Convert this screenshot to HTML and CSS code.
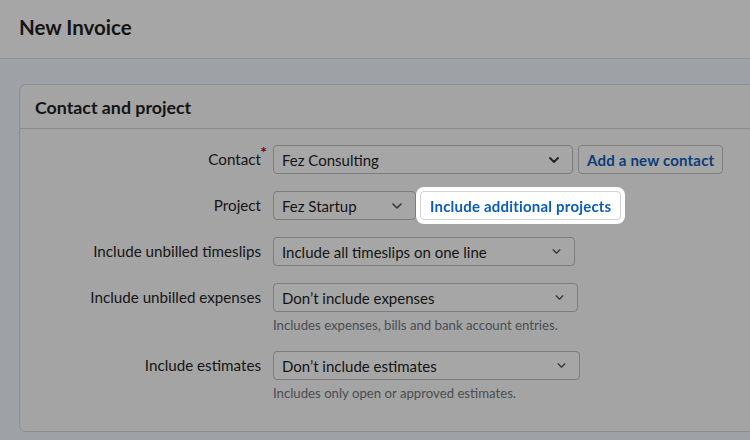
FILE: index.html
```html
<!DOCTYPE html>
<html lang="en">
<head>
<meta charset="utf-8">
<title>New Invoice</title>
<link rel="stylesheet" href="styles.css">
</head>
<body>
<header class="page-header">
  <h1 class="page-title">New Invoice</h1>
</header>
<main class="page-main">
  <section class="card">
    <div class="card-header">
      <h2 class="card-title">Contact and project</h2>
    </div>
    <div class="card-body">
      <div class="form-row">
        <label class="form-label">Contact<span class="required">*</span></label>
        <div class="form-control">
          <div class="control-line">
            <div class="select w-contact"><span>Fez Consulting</span><svg class="chev" viewBox="0 0 10 6" width="10" height="6"><path d="M1 1l4 4 4-4" fill="none" stroke="#333" stroke-width="1.8" stroke-linecap="round" stroke-linejoin="round"/></svg></div>
            <button class="btn">Add a new contact</button>
          </div>
        </div>
      </div>
      <div class="form-row">
        <label class="form-label">Project</label>
        <div class="form-control">
          <div class="control-line">
            <div class="select w-project"><span>Fez Startup</span><svg class="chev" viewBox="0 0 10 6" width="10" height="6"><path d="M1 1l4 4 4-4" fill="none" stroke="#555" stroke-width="1.6" stroke-linecap="round" stroke-linejoin="round"/></svg></div>
            <button class="btn btn-highlight">Include additional projects</button>
          </div>
        </div>
      </div>
      <div class="form-row">
        <label class="form-label">Include unbilled timeslips</label>
        <div class="form-control">
          <div class="select w-timeslips"><span>Include all timeslips on one line</span><svg class="chev" viewBox="0 0 10 6" width="9" height="5"><path d="M1 1l4 4 4-4" fill="none" stroke="#555" stroke-width="1.6" stroke-linecap="round" stroke-linejoin="round"/></svg></div>
        </div>
      </div>
      <div class="form-row">
        <label class="form-label">Include unbilled expenses</label>
        <div class="form-control">
          <div class="select w-expenses"><span>Don’t include expenses</span><svg class="chev" viewBox="0 0 10 6" width="9" height="5"><path d="M1 1l4 4 4-4" fill="none" stroke="#555" stroke-width="1.6" stroke-linecap="round" stroke-linejoin="round"/></svg></div>
          <p class="help">Includes expenses, bills and bank account entries.</p>
        </div>
      </div>
      <div class="form-row">
        <label class="form-label">Include estimates</label>
        <div class="form-control">
          <div class="select w-estimates"><span>Don’t include estimates</span><svg class="chev" viewBox="0 0 10 6" width="9" height="5"><path d="M1 1l4 4 4-4" fill="none" stroke="#555" stroke-width="1.6" stroke-linecap="round" stroke-linejoin="round"/></svg></div>
          <p class="help">Includes only open or approved estimates.</p>
        </div>
      </div>
    </div>
  </section>
</main>
<div class="overlay"></div>
</body>
</html>
```

FILE: styles.css
```css
* { box-sizing: border-box; }
html, body { margin: 0; padding: 0; }
body {
  background: #f3f8ff;
  font-family: Lato, "Noto Sans", sans-serif;
  color: #1f1f1f;
  width: 750px;
  height: 440px;
  overflow: hidden;
}
.page-header {
  height: 59px;
  background: #ffffff;
  border-bottom: 1px solid #dde1e7;
  display: flex;
  align-items: center;
  padding-left: 19px;
}
.page-title {
  margin: 0;
  font-size: 20.5px;
  font-weight: 700;
  color: #1f1f1f;
  margin-top: -5px;
}
.page-main {
  padding: 25px 0 0 19px;
}
.card {
  width: 760px;
  height: 348px;
  background: #fcfcfc;
  border: 1px solid #d6d8db;
  border-radius: 7px;
}
.card-header {
  height: 44px;
  display: flex;
  align-items: center;
  padding-left: 15px;
  border-bottom: 1px solid #d3d6da;
}
.card-title {
  margin: 0;
  font-size: 17.8px;
  font-weight: 700;
  color: #1f1f1f;
}
.card-body {
  padding-top: 16px;
  display: flex;
  flex-direction: column;
  gap: 17px;
}
.form-row {
  display: grid;
  grid-template-columns: 241px auto;
  column-gap: 12px;
  align-items: start;
}
.form-label {
  position: relative;
  text-align: right;
  font-size: 15.2px;
  line-height: 29px;
  color: #262626;
}
.required {
  position: absolute;
  right: -6px;
  top: -8px;
  color: #c00d1e;
  font-size: 16px;
  font-weight: 700;
}
.control-line {
  display: flex;
  gap: 5px;
}
.select {
  height: 29px;
  border: 1px solid #bfc1c4;
  border-radius: 4px;
  background: #ffffff;
  display: flex;
  align-items: center;
  justify-content: space-between;
  padding: 0 13px 0 8px;
  font-size: 15px;
  color: #1f1f1f;
}
.chev { flex: none; }
.w-contact { width: 300px; }
.w-project { width: 143px; }
.w-timeslips { width: 302px; }
.w-expenses { width: 305px; }
.w-estimates { width: 307px; }
.btn {
  height: 29px;
  border: 1px solid #c2c4c8;
  border-radius: 4px;
  background: #ffffff;
  color: #0f61bc;
  font-family: Lato, "Noto Sans", sans-serif;
  font-weight: 700;
  font-size: 15px;
  padding: 0 8px;
  letter-spacing: 0.2px;
}
.btn-highlight {
  position: relative;
  z-index: 11;
  margin-left: -1px;
  padding: 0 9px;
  color: #0b5cc0;
  border-color: #cfd2d6;
  box-shadow: 0 0 0 4px #ffffff;
}
.help {
  margin: 5px 0 0;
  font-size: 13.2px;
  line-height: 17px;
  color: #73787f;
}
.overlay {
  position: fixed;
  inset: 0;
  background: rgba(0, 0, 0, 0.35);
  z-index: 10;
}
```
